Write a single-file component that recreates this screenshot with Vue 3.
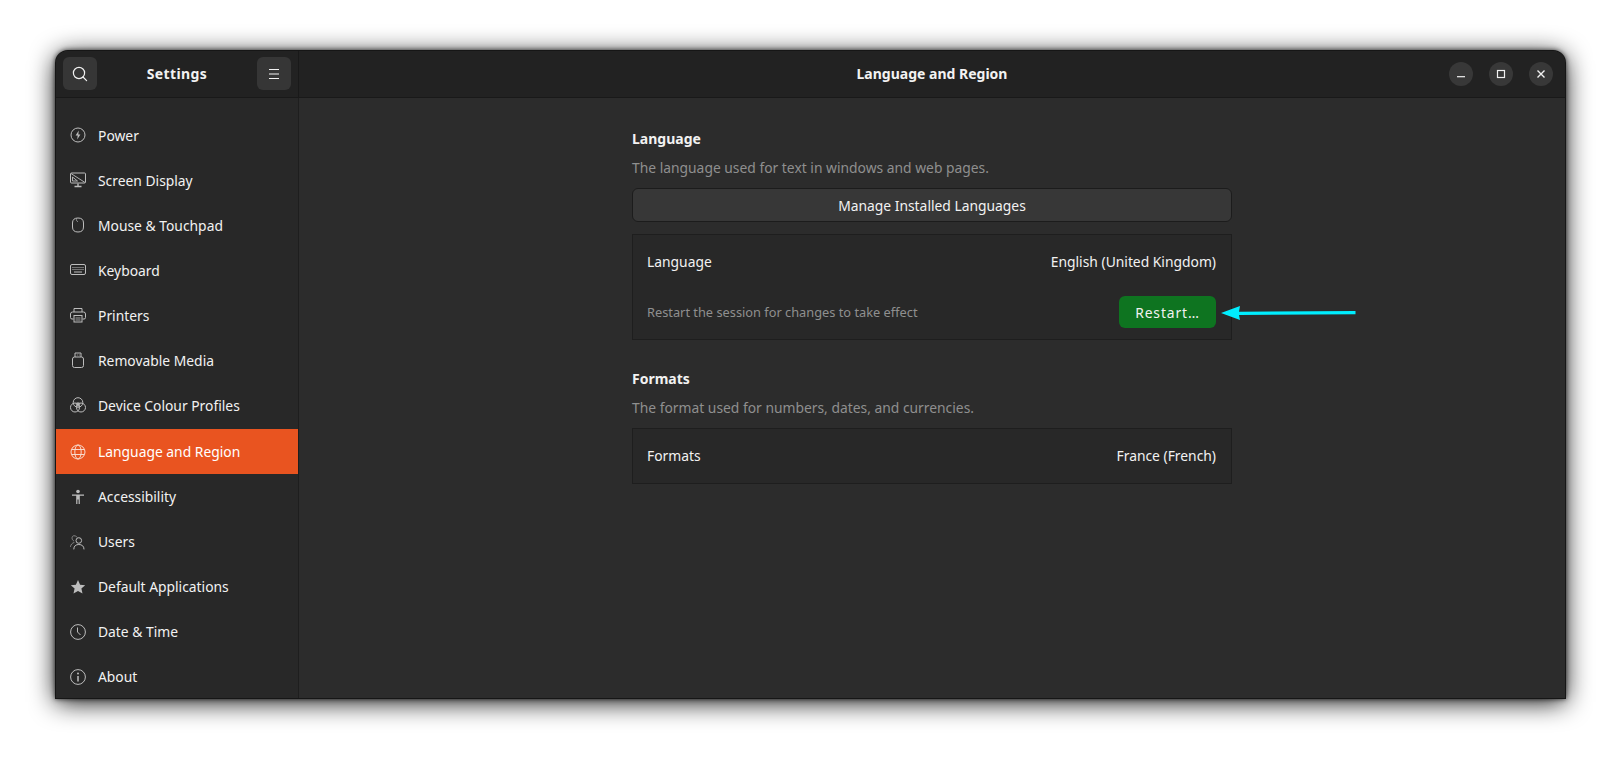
<template>
  <div class="page">
    <div class="window">
      <header class="titlebar">
        <div class="titlebar-left">
          <button class="head-btn" title="Search">
            <svg viewBox="0 0 16 16" fill="none" stroke="currentColor" stroke-width="1.2">
              <circle cx="7" cy="7" r="5.6" />
              <path d="M11 11l3.6 3.6" stroke-linecap="round" />
            </svg>
          </button>
          <span class="app-title">Settings</span>
          <button class="head-btn" title="Menu">
            <svg viewBox="0 0 16 16" fill="none" stroke="currentColor" stroke-width="1.1">
              <path d="M3 3.5h10M3 8h10M3 12.5h10" />
            </svg>
          </button>
        </div>
        <div class="titlebar-main">
          <span class="page-title">Language and Region</span>
          <div class="win-controls">
            <button class="win-btn">
              <svg viewBox="0 0 16 16" fill="none" stroke="currentColor" stroke-width="1.2"><path d="M4 10.7h8" /></svg>
            </button>
            <button class="win-btn">
              <svg viewBox="0 0 16 16" fill="none" stroke="currentColor" stroke-width="1.2"><rect x="4.5" y="4.5" width="7" height="7" /></svg>
            </button>
            <button class="win-btn">
              <svg viewBox="0 0 16 16" fill="none" stroke="currentColor" stroke-width="1.4"><path d="M4.5 4.5l7 7M11.5 4.5l-7 7" /></svg>
            </button>
          </div>
        </div>
      </header>

      <div class="body">
        <nav class="sidebar">
          <div
            v-for="item in navItems"
            :key="item.label"
            class="nav-row"
            :class="{ 'nav-row--active': item.active }"
          >
            <svg class="nav-icon" viewBox="0 0 16 16" fill="none" stroke="currentColor" stroke-width="1" v-html="item.icon"></svg>
            <span>{{ item.label }}</span>
          </div>
        </nav>

        <main class="content">
          <div class="column">
            <section>
              <h2>Language</h2>
              <p class="hint">The language used for text in windows and web pages.</p>
              <button class="manage-btn">Manage Installed Languages</button>
              <div class="card">
                <div class="card-row">
                  <span>Language</span>
                  <span>English (United Kingdom)</span>
                </div>
                <div class="card-row card-row--restart">
                  <span class="restart-note">Restart the session for changes to take effect</span>
                  <button class="restart-btn">Restart…</button>
                </div>
                <!-- annotation arrow -->
                <svg class="arrow" viewBox="0 0 135 16">
                  <path d="M0 8L19 1L18 6.7L134.500 5.900V9.200L18 10L19 15z" fill="#00eeff" />
                </svg>
              </div>
            </section>

            <section class="formats">
              <h2>Formats</h2>
              <p class="hint">The format used for numbers, dates, and currencies.</p>
              <div class="card card--formats">
                <div class="card-row">
                  <span>Formats</span>
                  <span>France (French)</span>
                </div>
              </div>
            </section>
          </div>
        </main>
      </div>
    </div>
  </div>
</template>

<script setup>
const navItems = [
  { label: 'Power', icon: '<circle cx="8" cy="8" r="7" /><path d="M8.800 3.600L5.600 8.600h2.100l-.5 3.800 3.200-5h-2.100z" fill="currentColor" stroke="none" />' },
  { label: 'Screen Display', icon: '<rect x="0.500" y="1" width="15" height="10" rx="1" /><path d="M1 1.500l14 9M2.500 9V5l5 4z" stroke-width=".9" /><path d="M4.500 14.500h7M8 11.500v3" stroke-width="1.400" />' },
  { label: 'Mouse & Touchpad', icon: '<path d="M2.500 6C2.500 2.500 4.500 1 8 1s5.500 1.500 5.500 5v4C13.500 13.500 11.500 15 8 15s-5.500-1.500-5.500-5z" /><path d="M6.500 1.500C6 3 6.500 4.500 8 4.500" stroke-width=".7" />' },
  { label: 'Keyboard', icon: '<rect x="0.500" y="2.500" width="15" height="10" rx="1.500" /><path d="M2.500 5.500h11M2.500 7.500h11" stroke-dasharray="1 1" /><path d="M4 10h8" />' },
  { label: 'Printers', icon: '<path d="M4 5V1.500h8V5" /><path d="M3.500 12H2a1.500 1.500 0 0 1-1.500-1.500V7A2 2 0 0 1 2.500 5h11a2 2 0 0 1 2 2v3.500A1.500 1.500 0 0 1 14 12h-1.500" /><rect x="4" y="8.500" width="8" height="6.500" /><path d="M5.500 11h5M5.500 13h5" stroke-width=".8" />' },
  { label: 'Removable Media', icon: '<rect x="2.500" y="5" width="11" height="10.500" rx="2" /><path d="M5 5V1h6v4" /><path d="M6.800 3h.9M8.800 3h.9" stroke-width=".9" />' },
  { label: 'Device Colour Profiles', icon: '<circle cx="8" cy="5.500" r="4.800" /><circle cx="5" cy="10.500" r="4.500" /><circle cx="11" cy="10.500" r="4.500" /><path d="M5.500 6.500L8 5l2.500 1.500L9.500 9.500h-3z" fill="currentColor" stroke="none" opacity=".75" />' },
  { label: 'Language and Region', active: true, icon: '<circle cx="8" cy="8" r="7" /><ellipse cx="8" cy="8" rx="3.200" ry="7" /><path d="M1.500 5.500h13M1.500 10.500h13" />' },
  { label: 'Accessibility', icon: '<circle cx="8" cy="2.500" r="1.800" fill="currentColor" stroke="none" /><path d="M2 5.500h12v1.300H9.800V15H8.600v-4.500H7.400V15H6.200V6.800H2z" fill="currentColor" stroke="none" />' },
  { label: 'Users', icon: '<circle cx="8.800" cy="6.500" r="2.800" /><path d="M3.800 15c0-3 2-4.500 5-4.500s5.200 1.500 5.200 4.500" stroke-linecap="round" /><path d="M7 3.200A3 3 0 0 0 3.500 1.800C1.500 2.500 1.500 5.500 3.500 6.800M4 8.500C2 9.200.8 10.500.5 12.500" opacity=".6" stroke-linecap="round" />' },
  { label: 'Default Applications', icon: '<path d="M8 1l2.100 4.700 5.100.5-3.800 3.400 1.100 5L8 12l-4.500 2.600 1.100-5L.8 6.200l5.100-.5z" fill="currentColor" stroke="none" />' },
  { label: 'Date & Time', icon: '<circle cx="8" cy="8" r="7.400" /><path d="M7.500 3.500V8l3 3" />' },
  { label: 'About', icon: '<circle cx="8" cy="8" r="7.400" /><circle cx="8" cy="4.600" r="1" fill="currentColor" stroke="none" /><path d="M8 7v5.500" stroke-width="1.500" />' }
]
</script>

<style>
html, body {
  background: #fff;
}
</style>

<style scoped>
.page {
  padding: 51px 0 0 56px;
  height: 760px;
  box-sizing: border-box;
  font-family: "Noto Sans", sans-serif;
  overflow: hidden;
}

.window {
  width: 1509px;
  height: 647px;
  border-radius: 12px 12px 0 0;
  background: #2c2c2c;
  color: #f2f2f2;
  font-size: 13.85px;
  display: flex;
  flex-direction: column;
  box-shadow: 0 0 0 1px #161616, 0 0 5px 1px rgba(0, 0, 0, 0.7), 0 4px 26px rgba(0, 0, 0, 0.95);
}

button {
  font-family: inherit;
  color: inherit;
  border: none;
  padding: 0;
}

.titlebar {
  display: flex;
  height: 47px;
  flex-shrink: 0;
  background: #222222;
  border-bottom: 1px solid #191919;
  box-sizing: border-box;
  border-radius: 12px 12px 0 0;
}

.titlebar-left {
  width: 243px;
  box-sizing: border-box;
  display: flex;
  align-items: center;
  justify-content: space-between;
  padding: 0 7px 1px;
  border-right: 1px solid #191919;
}

.app-title {
  font-weight: 700;
  font-size: 14px;
  letter-spacing: 0.4px;
}

.page-title {
  font-weight: 700;
  font-size: 14px;
}

.head-btn {
  width: 34px;
  height: 33px;
  border-radius: 6px;
  background: #363636;
  display: flex;
  align-items: center;
  justify-content: center;
}

.head-btn svg {
  width: 16px;
  height: 16px;
}

.titlebar-main {
  flex: 1;
  position: relative;
  display: flex;
  align-items: center;
  justify-content: center;
  padding-bottom: 1px;
}

.win-controls {
  position: absolute;
  right: 12px;
  top: 11px;
  display: flex;
  gap: 16px;
}

.win-btn {
  width: 24px;
  height: 24px;
  border-radius: 50%;
  background: #383838;
  display: flex;
  align-items: center;
  justify-content: center;
}

.win-btn svg {
  width: 16px;
  height: 16px;
}

.body {
  flex: 1;
  display: flex;
  min-height: 0;
}

.sidebar {
  width: 243px;
  box-sizing: border-box;
  flex-shrink: 0;
  background: #282828;
  border-right: 1px solid #1e1e1e;
  padding-top: 14.5px;
  display: flex;
  flex-direction: column;
}

.nav-row {
  height: 45px;
  flex-shrink: 0;
  display: flex;
  align-items: center;
  gap: 12px;
  padding-left: 14px;
}

.nav-row--active {
  margin-top: 1.5px;
  background: #e95420;
  color: #fff;
}

.nav-icon {
  width: 16px;
  height: 16px;
  color: #bdbdbd;
}

.nav-row--active .nav-icon {
  color: #f9d9cc;
}

.content {
  flex: 1;
  display: flex;
  justify-content: center;
}

.column {
  width: 600px;
  padding-top: 31px;
}

h2 {
  margin: 0;
  font-size: 14px;
  font-weight: 700;
  line-height: 20px;
}

.hint {
  margin: 9px 0 0;
  line-height: 20px;
  color: #8f8f8f;
}

.manage-btn {
  display: block;
  width: 100%;
  height: 34px;
  margin-top: 10px;
  font-size: 13.85px;
  background: #373737;
  border: 1px solid #1c1c1c;
  border-radius: 6px;
}

.card {
  position: relative;
  margin-top: 12px;
  background: #282828;
  border: 1px solid #1e1e1e;
  padding: 0 15px 0 14px;
}

.card-row {
  display: flex;
  align-items: center;
  justify-content: space-between;
  height: 53px;
}

.card-row--restart {
  height: 51px;
  box-sizing: border-box;
  padding-bottom: 3px;
}

.restart-note {
  font-size: 12.8px;
  color: #8f8f8f;
}

.restart-btn {
  width: 97px;
  height: 32px;
  border-radius: 6px;
  background: #0e7420;
  font-size: 13.85px;
  letter-spacing: 0.9px;
}

.arrow {
  position: absolute;
  left: 588px;
  top: 70px;
  width: 135px;
  height: 16px;
}

.formats {
  margin-top: 29px;
}

.card--formats {
  margin-top: 10px;
}

.card--formats .card-row {
  height: 54px;
  box-sizing: border-box;
  padding-bottom: 1px;
}
</style>
